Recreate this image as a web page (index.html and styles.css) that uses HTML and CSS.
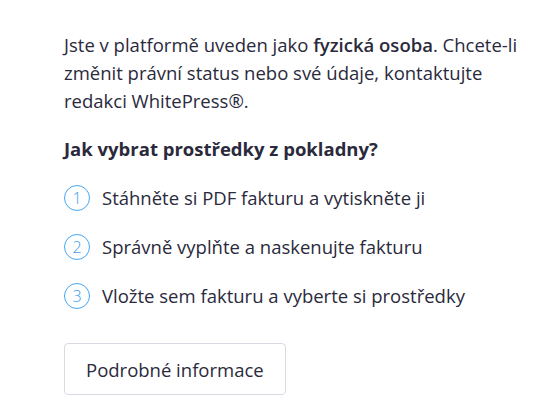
FILE: index.html
```html
<!DOCTYPE html>
<html lang="cs">
<head>
<meta charset="utf-8">
<link rel="stylesheet" href="styles.css">
</head>
<body>
<div class="panel">
  <p class="intro">Jste v platformě uveden jako <strong>fyzická osoba</strong>. Chcete-li změnit právní status nebo své údaje, kontaktujte redakci WhitePress®.</p>
  <h3 class="title">Jak vybrat prostředky z pokladny?</h3>
  <ol class="steps">
    <li class="step"><span class="num">1</span><span>Stáhněte si PDF fakturu a vytiskněte ji</span></li>
    <li class="step"><span class="num">2</span><span>Správně vyplňte a naskenujte fakturu</span></li>
    <li class="step"><span class="num">3</span><span>Vložte sem fakturu a vyberte si prostředky</span></li>
  </ol>
  <button class="btn" type="button">Podrobné informace</button>
</div>
</body>
</html>
```
FILE: styles.css
```css
html, body {
  margin: 0;
  padding: 0;
  background: #ffffff;
}
body {
  font-family: "Open Sans", "Noto Sans", sans-serif;
  color: #2a2a3c;
  font-size: 18.5px;
}
.panel {
  padding: 31px 0 0 64px;
  width: 470px;
}
.intro {
  margin: 0;
  line-height: 28px;
}
.intro strong {
  font-weight: 600;
}
.title {
  margin: 20px 0 0;
  font-size: 18.5px;
  font-weight: 700;
  line-height: 28px;
}
.steps {
  list-style: none;
  margin: 21px 0 0;
  padding: 0;
  display: flex;
  flex-direction: column;
  gap: 21px;
}
.step {
  display: flex;
  align-items: center;
  gap: 12px;
  line-height: 28px;
}
.num {
  flex: none;
  width: 26px;
  height: 26px;
  box-sizing: border-box;
  border: 1px solid #45a6f4;
  border-radius: 50%;
  color: #3d9cf0;
  font-size: 16px;
  font-weight: 300;
  line-height: 24px;
  text-align: center;
}
.btn {
  display: block;
  margin-top: 33px;
  font-family: inherit;
  font-size: 18.5px;
  color: #2a2a3c;
  background: #fff;
  border: 1px solid #d9d9e3;
  border-radius: 4px;
  padding: 0 21px;
  height: 52px;
}
```
